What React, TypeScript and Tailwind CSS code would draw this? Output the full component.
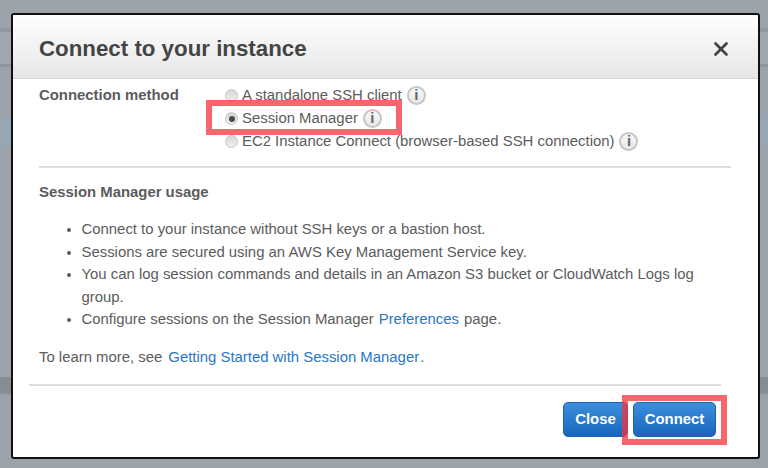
import { X } from 'lucide-react';

function Info() {
  return (
    <span className="ml-[5px] inline-flex h-[19px] w-[19px] items-center justify-center rounded-full border-2 border-[#c6c6c6] bg-gradient-to-b from-[#f8f8f8] to-[#e8e8e8] text-[15px] font-bold text-[#666]">
      i
    </span>
  );
}

function Radio({ checked }: { checked?: boolean }) {
  return (
    <span className="mr-[4px] flex h-[13px] w-[13px] items-center justify-center rounded-full border border-[#c8c8c8] bg-gradient-to-b from-[#d4d4d4] to-[#f0f0f0]">
      {checked && <span className="h-[6px] w-[6px] rounded-full bg-[#4a4a4a]" />}
    </span>
  );
}

const USAGE = [
  'Connect to your instance without SSH keys or a bastion host.',
  'Sessions are secured using an AWS Key Management Service key.',
  'You can log session commands and details in an Amazon S3 bucket or CloudWatch Logs log group.',
];

export default function App() {
  return (
    <div className="relative h-[468px] w-[768px] overflow-hidden bg-[#9ca3ab] font-['Liberation_Sans',Arial,sans-serif] text-[14.9px] text-[#5c5c5c]">
      {/* page behind the overlay */}
      <div className="flex flex-col pt-[28px]">
        <div className="h-[4px] bg-[#92989f]" />
        <div className="h-[32px] bg-[#a1a7ae]" />
        <div className="h-[3px] bg-[#8f959c]" />
        <div className="h-[48px] bg-[#9ca3ab]" />
        <div className="h-[33px] bg-[#98a6b3]" />
        <div className="h-[229px]" />
        <div className="h-[16px] bg-[#878c92]" />
        <div className="h-[2px] bg-[#92989f]" />
      </div>

      {/* modal */}
      <div className="absolute left-[11px] top-[13px] flex h-[446px] w-[749px] flex-col overflow-hidden rounded-[3px] border-2 border-[#111] bg-white">
        <div className="flex h-[64px] items-center justify-between border-b border-[#d5d5d5] bg-gradient-to-b from-white to-[#e6e6e6] pl-[26px] pr-[26px] pt-[5px]">
          <h1 className="text-[22.3px] font-bold leading-none text-[#444]">Connect to your instance</h1>
          <X size={22} strokeWidth={3} className="text-[#444]" />
        </div>

        <div className="flex flex-1 flex-col pl-[26px] pr-[27px] pt-[5px]">
          <div className="flex">
            <div className="w-[186px] pt-[1px] font-bold leading-[20px]">Connection method</div>
            <div className="flex flex-col">
              <div className="flex h-[23px] items-center"><Radio />A standalone SSH client<Info /></div>
              <div className="flex h-[23px] items-center"><Radio checked />Session Manager<Info /></div>
              <div className="flex h-[23px] items-center"><Radio />EC2 Instance Connect (browser-based SSH connection)<Info /></div>
            </div>
          </div>

          <div className="mt-[13px] h-[2px] bg-[#ddd]" />

          <h2 className="mt-[14px] font-bold leading-[20px]">Session Manager usage</h2>

          <ul className="mt-[16px] list-disc pl-[42.5px] leading-[22.5px]">
            {USAGE.map((line) => (
              <li key={line}>{line}</li>
            ))}
            <li>
              Configure sessions on the Session Manager
              <a className="mx-[5px] text-[#2a76cc]">Preferences</a>
              page.
            </li>
          </ul>

          <p className="mt-[16px] leading-[20px]">
            To learn more, see
            <a className="mx-[6px] text-[#2a76cc]">Getting Started with Session Manager</a>
            <span className="-ml-[5px]">.</span>
          </p>

          <div className="-ml-[10px] mr-[10px] mt-[17px] h-[2px] bg-[#ddd]" />

          <div className="mr-[15px] mt-[16px] flex justify-end gap-[5px]">
            <button className="h-[35px] w-[65px] rounded-[5px] border border-[#1a63b0] bg-gradient-to-b from-[#3d8fdc] to-[#1566bd] font-bold text-white">Close</button>
            <button className="h-[35px] w-[83px] rounded-[5px] border border-[#1a63b0] bg-gradient-to-b from-[#3d8fdc] to-[#1566bd] font-bold text-white">Connect</button>
          </div>
        </div>
      </div>

      {/* annotation boxes */}
      <div className="absolute left-[206px] top-[100px] h-[35px] w-[196px] border-[6px] border-[#f4323c]/75" />
      <div className="absolute left-[622px] top-[395px] h-[50px] w-[105px] border-[6px] border-[#f4323c]/75" />
    </div>
  );
}
